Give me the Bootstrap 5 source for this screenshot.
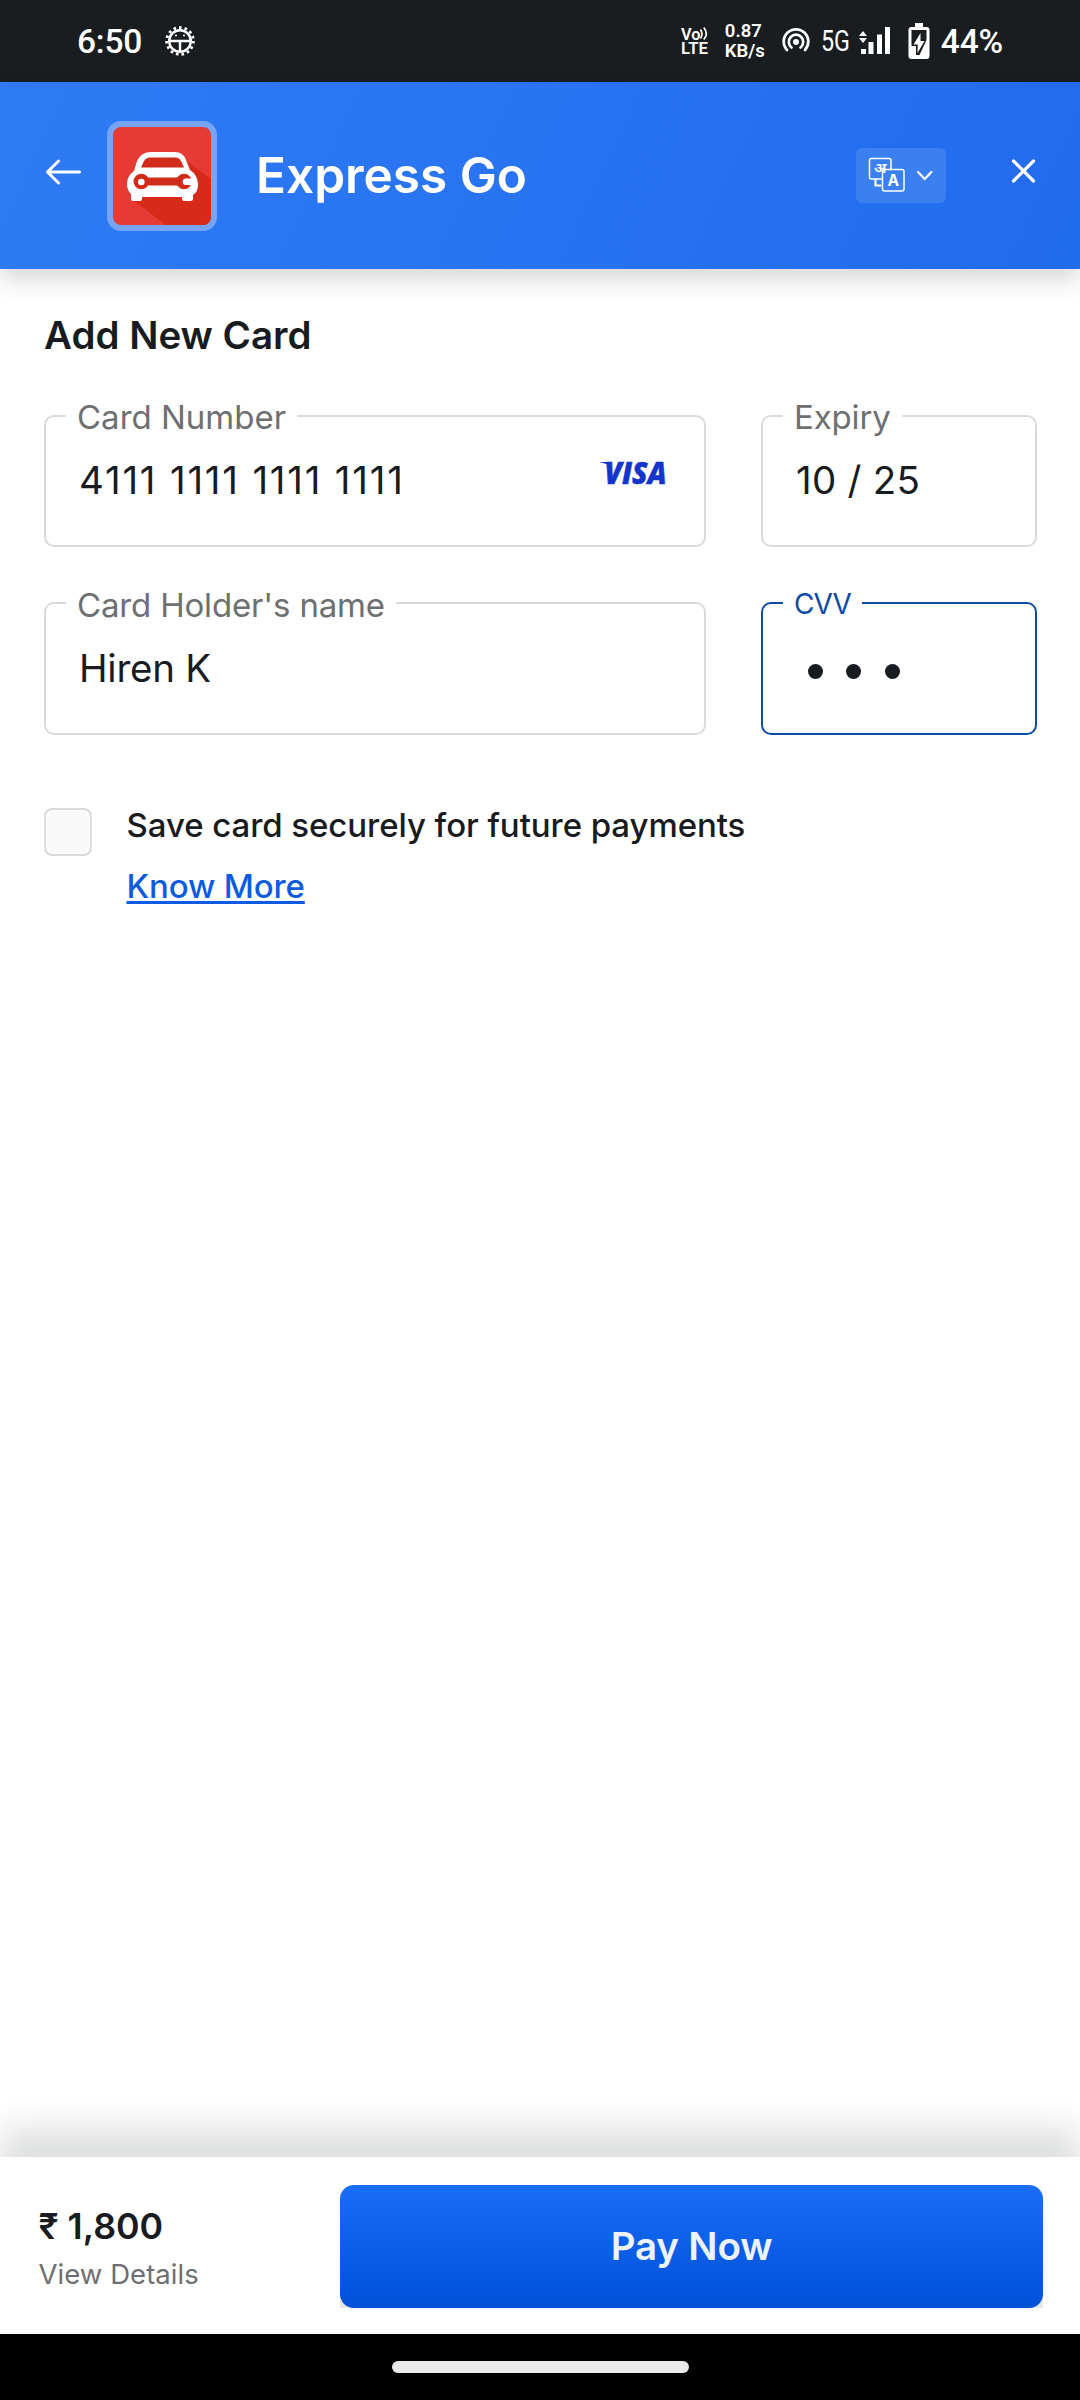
<!DOCTYPE html>
<html lang="en">
<head>
<meta charset="utf-8">
<meta name="viewport" content="width=device-width, initial-scale=1">
<title>Express Go</title>
<link href="https://cdn.jsdelivr.net/npm/bootstrap@5.3.0/dist/css/bootstrap.min.css" rel="stylesheet">
<style>
body{font-family:Inter,"Noto Sans",sans-serif;color:#181b20;background:#fff;height:2400px;overflow:hidden}
svg{display:block;flex:none;overflow:visible}
.status{height:82px;background:#191d20;color:#fff;font-family:Roboto,sans-serif;font-weight:500;padding:0 77px}
.clock{font-size:33.5px;line-height:40px;letter-spacing:-.2px;padding-top:2px}
.alert-gear{margin:0 auto 0 22px}
.rate{font-size:18.5px;line-height:20.5px;font-weight:600;width:42px;margin-left:14px}
.hotspot{margin-left:15px}
.net{margin-left:11px}
.bars{margin-left:10px}
.battery{margin:0 11px 0 17px}
.topbar{height:187px;background:linear-gradient(115deg,#2f7bf5,#216bed);box-shadow:0 11px 22px rgba(20,30,25,.17);padding-left:46px;z-index:1}
.back{margin-top:-7px}
.logo{width:110px;height:110px;border:6px solid #76a4f7;border-radius:14px;overflow:hidden;background:#e53b34;margin:0 39px 0 25px}
.brand{font-size:49.5px;font-weight:600;line-height:60px;color:#fff;margin-top:-1px}
.lang{width:90px;height:55px;border-radius:6px;background:#3b80f0}
.dismiss{margin:-9px 42px 0 64px}
.content{padding:43px 43px 0 44px}
.heading{font-size:38.5px;font-weight:600;line-height:46px;margin:0 0 57px}
.wide{width:662px}
.narrow{width:276px}
.field{height:132px;border:2px solid #d9dadb;border-radius:10px;padding:40px 34px 0 33px;font-size:38.5px;line-height:46px}
.second .field{height:133px;padding-top:41px}
.second{margin-top:55px}
.pan{letter-spacing:1.8px}
.exp{letter-spacing:.25px}
.holder{letter-spacing:-.25px}
.legendary{left:20px;top:-20px;padding:0 11px;background:#fff;color:#6d6f71;font-size:33px;line-height:40px;white-space:nowrap}
.narrow .legendary{letter-spacing:-.15px}
.second .legendary{top:-19px;letter-spacing:-.17px}
.field.focused{border-color:#0f4aa3}
.second .focused .legendary{color:#0f4aa3;font-size:28px;top:-20px;letter-spacing:-.9px}
.dots i{width:15.4px;height:15.4px;border-radius:50%;background:#181b20}
.dots{gap:23.2px;padding:19px 0 0 11.5px}
.tick{width:48px;height:48px;border:2px solid #d9dadb;border-radius:8px;background:#f9f9f9;margin:2.5px 34.5px 0 0}
.save{margin-top:70px;font-size:33px;font-weight:500;line-height:40px}
.savetext{letter-spacing:-.07px}
.more{color:#0d5be1;margin-top:20.5px;letter-spacing:-.15px;text-decoration:underline;text-decoration-thickness:3px;text-underline-offset:3px}
.footer-bar{height:177px;box-shadow:0 -29px 30px rgba(20,35,30,.13),0 -34px 60px rgba(20,35,30,.015);padding:28px 37px 0 38.5px}
.total{padding-top:19px}
.amount{font-size:35.75px;font-weight:600;line-height:44px}
.details{font-size:27.5px;line-height:34px;margin-top:9px;color:#6d6f71;letter-spacing:.05px}
.pay{width:703px;height:123px;background:linear-gradient(#fff 50%,#e4e6ea 50%)}
.pay .btn{border-radius:14px;border:0;background:linear-gradient(#1a6df7,#0050d8);color:#edf3fd;font-size:38.5px;font-weight:600;line-height:46px;padding:6px 0 7px;letter-spacing:-.15px}
.gesture{height:66px;background:#000;padding-top:27px}
.pill{width:297px;height:12px;border-radius:6px;background:#ebebeb}
</style>
</head>
<body class="d-flex flex-column">
<div class="status d-flex align-items-center flex-shrink-0">
  <span class="clock">6:50</span>
  <svg class="alert-gear" width="32" height="32" viewBox="-16 -16 32 32" fill="none" stroke="#fff">
    <circle r="10.800" stroke-width="2.400"/><circle r="13.400" stroke-width="2.800" stroke-dasharray="2.600 3.013"/>
    <path d="M-11 0H11M0 0V11" stroke-width="2.400"/><circle cx="-4" cy="-5.500" r="1" fill="#fff" stroke="none"/><circle cx="4" cy="-5.500" r="1" fill="#fff" stroke="none"/>
  </svg>
  <svg width="30" height="32" viewBox="0 0 30 32" fill="#fff">
    <text x="0" y="14.500" font-size="16.500" font-weight="600" textLength="19.500" lengthAdjust="spacingAndGlyphs">Vo</text>
    <path d="M19.500 4.500Q22.500 9 19.500 13.500M22.800 2.500Q27.800 9 22.800 14.500" fill="none" stroke="#fff" stroke-width="1.700"/>
    <text x="0" y="29" font-size="16" font-weight="600" textLength="27" lengthAdjust="spacingAndGlyphs">LTE</text>
  </svg>
  <div class="rate text-nowrap">0.87<br>KB/s</div>
  <svg class="hotspot" width="28" height="28" viewBox="0 0 28 28" fill="none" stroke="#fff" stroke-width="2.700" stroke-linecap="round">
    <circle cx="14" cy="15" r="3" fill="#fff" stroke="none"/><path d="M9.500 20.500A7.200 7.200 0 1 1 18.500 20.500M5 23A12.300 12.300 0 1 1 23 23"/>
  </svg>
  <svg class="net" width="28" height="34" viewBox="0 0 28 34" fill="#fff"><text x="0" y="27" font-size="29" font-weight="400" textLength="29" lengthAdjust="spacingAndGlyphs">5G</text></svg>
  <svg class="bars" width="32" height="30" viewBox="0 0 32 30" fill="#fff"><path d="M2 23h5v5H2zM9.500 16h5v12h-5zM18 8.500h5V28h-5zM26 1h5v27h-5zM4 5l4 5H0zM0 12h8l-4 5z"/></svg>
  <svg class="battery" width="22" height="38" viewBox="0 0 22 38"><path d="M7 1h8v4h3.500a3 3 0 0 1 3 3v26a3 3 0 0 1-3 3h-15a3 3 0 0 1-3-3V8a3 3 0 0 1 3-3H7z" fill="#fff"/><path d="M3.500 8h15v10l-7 15h-3.500V24h-4.500z" fill="#191d20"/><path d="M12.500 11L5.500 22.500h4.200L9.500 31 16.500 19h-4z" fill="#fff"/></svg>
  <span class="clock">44%</span>
</div>

<header class="topbar d-flex align-items-center flex-shrink-0 position-relative">
  <svg class="back" width="36" height="28" viewBox="0 0 36 28" fill="none" stroke="#fff" stroke-width="3" stroke-linecap="round" stroke-linejoin="round"><path d="M33.500 14H1.500M12.500 3L1.500 14l11 11"/></svg>
  <div class="logo flex-shrink-0">
    <svg width="98" height="98" viewBox="0 0 98 98">
      <path d="M20 73L53 98H98V52L72 33z" fill="#d72a19"/>
      <path d="M38 25H62Q70 25 73 33L77 43Q85 48 85 58Q85 65 80 68V72Q80 74 77.500 74H71Q69 74 69 72V70H29V72Q29 74 27 74H21Q18 74 18 72V67Q14 63 14 57Q14 49 21 44L24 34Q28 25 38 25z" fill="#fff"/>
      <path d="M37 30.500H63Q66 30.500 68 34L71 40.500H28L31 34Q33 30.500 37 30.500z" fill="#d02b1b"/>
      <path d="M28 50.500H71V58.500H28z" fill="#d02b1b"/><circle cx="28.300" cy="54.500" r="7.800" fill="#d02b1b"/><circle cx="71" cy="54.500" r="7.800" fill="#d02b1b"/>
      <circle cx="28.300" cy="55" r="3.300" fill="#fff"/><path d="M79 51.500h-6a3.300 3.300 0 0 0 0 6.600h6z" fill="#fff"/>
    </svg>
  </div>
  <span class="brand">Express Go</span>
  <div class="lang d-flex align-items-center ms-auto flex-shrink-0">
    <svg width="90" height="55" viewBox="0 0 90 55" fill="none" stroke="#fff" stroke-width="1.500">
      <path d="M26.500 31H15.500a2 2 0 0 1-2-2V12.500a2 2 0 0 1 2-2H33a2 2 0 0 1 2 2V21.500"/><rect x="26.500" y="21.500" width="21.500" height="21.500" rx="2"/>
      <path d="M19.500 31v6.500h6" stroke-width="2.200"/>
      <text x="18" y="25" font-size="14.500" font-weight="600" fill="#fff" stroke="none" font-family="Noto Sans,sans-serif" textLength="12.500" lengthAdjust="spacingAndGlyphs">अ</text>
      <text x="37.300" y="38" font-size="15.500" font-weight="700" fill="#fff" stroke="none" text-anchor="middle" font-family="Inter">A</text>
      <path d="M62 24l6.700 7 6.700-7" stroke-width="2.200" stroke-linecap="round" stroke-linejoin="round"/>
    </svg>
  </div>
  <svg class="dismiss" width="28" height="28" viewBox="0 0 28 28" stroke="#fff" stroke-width="3.200" stroke-linecap="round"><path d="M3.500 4L23.500 24M23.500 4L3.500 24"/></svg>
</header>

<main class="content flex-grow-1">
  <h1 class="heading">Add New Card</h1>
  <div class="d-flex justify-content-between">
    <div class="field wide position-relative d-flex justify-content-between">
      <label class="legendary position-absolute">Card Number</label>
      <span class="pan">4111 1111 1111 1111</span>
      <svg width="70" height="30" viewBox="0 0 70 30" fill="#1434cb"><path d="M-1 5H10L12 11Q8 6.500 -1 5z"/><text x="4.500" y="27" font-family="Open Sans,sans-serif" font-weight="800" font-style="italic" font-size="30.500" textLength="62" lengthAdjust="spacingAndGlyphs" stroke="#1434cb" stroke-width=".5">VISA</text></svg>
    </div>
    <div class="field narrow position-relative"><label class="legendary position-absolute">Expiry</label><span class="exp">10 / 25</span></div>
  </div>
  <div class="second d-flex justify-content-between">
    <div class="field wide position-relative"><label class="legendary position-absolute">Card Holder's name</label><span class="holder">Hiren K</span></div>
    <div class="field narrow focused position-relative"><label class="legendary position-absolute">CVV</label><div class="dots d-flex"><i></i><i></i><i></i></div></div>
  </div>
  <div class="save d-flex align-items-start">
    <span class="tick flex-shrink-0"></span>
    <div><div class="savetext">Save card securely for future payments</div><a href="#" class="more d-inline-block">Know More</a></div>
  </div>
</main>

<footer class="footer-bar d-flex justify-content-between flex-shrink-0">
  <div class="total"><div class="amount">₹ 1,800</div><div class="details">View Details</div></div>
  <div class="pay"><button class="btn w-100 h-100">Pay Now</button></div>
</footer>
<div class="gesture flex-shrink-0 d-flex justify-content-center"><div class="pill"></div></div>
<script src="https://cdn.jsdelivr.net/npm/bootstrap@5.3.0/dist/js/bootstrap.bundle.min.js"></script>
</body>
</html>
